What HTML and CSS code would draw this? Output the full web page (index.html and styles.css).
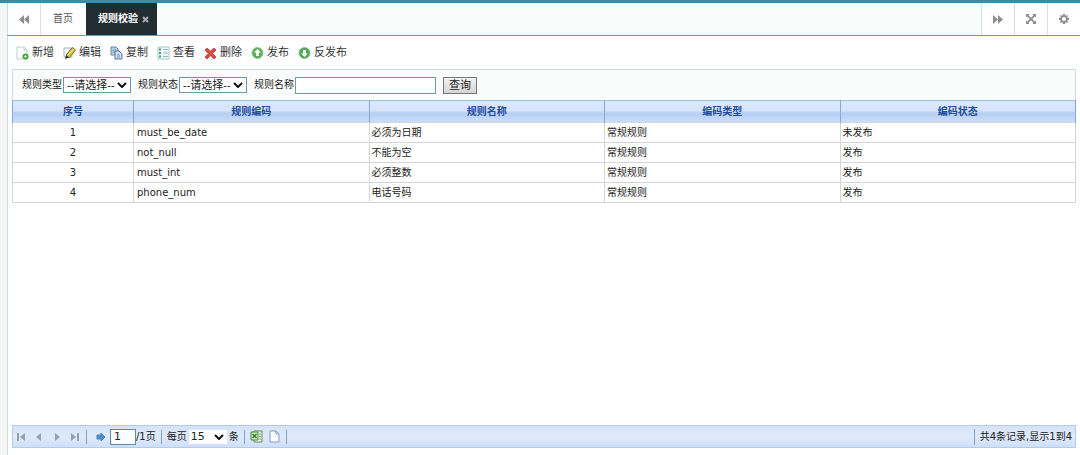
FILE: index.html
```html
<!DOCTYPE html>
<html lang="zh-CN">
<head>
<meta charset="UTF-8">
<title>规则校验</title>
<link rel="stylesheet" href="styles.css">
</head>
<body>

<div class="page">

  <!-- tab bar -->
  <nav class="tabs">
    <button type="button" class="tab-btn tab-prev" aria-label="向左">
      <svg width="10" height="9" viewBox="0 0 10 9"><path d="M5 0v9L0 4.500zM10 0v9L5 4.500z"/></svg>
    </button>
    <a href="#" class="tab">首页</a>
    <a href="#" class="tab active">规则校验
      <svg width="7" height="7" viewBox="0 0 7 7"><path d="M1 1l5 5M6 1L1 6"/></svg>
    </a>
    <span class="tabs-space"></span>
    <button type="button" class="tab-btn" aria-label="向右">
      <svg width="10" height="9" viewBox="0 0 10 9"><path d="M0 0v9l5-4.500zM5 0v9l5-4.500z"/></svg>
    </button>
    <button type="button" class="tab-btn" aria-label="全屏">
      <svg width="10" height="10" viewBox="0 0 10 10"><path d="M0 0h3.500L2.500 1.200 5 3.700l2.500-2.500L6.500 0H10v3.500L8.800 2.500 6.300 5l2.500 2.500L10 6.500V10H6.500l1-1.200L5 6.300 2.500 8.800l1 1.200H0V6.500l1.200 1L3.700 5 1.200 2.500 0 3.500z"/></svg>
    </button>
    <button type="button" class="tab-btn" aria-label="设置">
      <svg width="10" height="10" viewBox="0 0 10 10"><path fill-rule="evenodd" d="M4 0h2l.3 1.400.8.3L8.300 1 9 1.700l-.7 1.200.3.8L10 4v2l-1.400.3-.3.8.7 1.200-.7.7-1.200-.7-.8.3L6 10H4l-.3-1.400-.8-.3L1.700 9 1 8.300l.7-1.200-.3-.8L0 6V4l1.400-.3.3-.8L1 1.700 1.700 1l1.200.7.8-.3zM5 3a2 2 0 1 0 0 4 2 2 0 0 0 0-4z"/></svg>
    </button>
  </nav>

  <main class="content">

    <!-- actions -->
    <div class="toolbar">
      <button type="button">
        <svg width="13" height="14" viewBox="0 0 13 14"><path d="M1 1h7l3 3v9H1z" fill="#fcfdfd" stroke="#c3cdd0"/><path d="M8 1v3h3" fill="none" stroke="#c3cdd0"/><circle cx="9.500" cy="10.500" r="3" fill="#43a33b"/><path d="M9.500 9v3M8 10.500h3" stroke="#d4f2cb"/></svg>
        新增
      </button>
      <button type="button">
        <svg width="13" height="14" viewBox="0 0 13 14"><path d="M1 2h8v9H1z" fill="#f4f6f6" stroke="#aab2b5"/><path d="M3 9l6.500-7.500 3 2.500L6 12z" fill="#d8c83a" stroke="#6f7024"/><path d="M5 9l5.500-6" stroke="#f5ee8b"/><path d="M2 13l1-4 3 2.500z" fill="#333"/></svg>
        编辑
      </button>
      <button type="button">
        <svg width="13" height="14" viewBox="0 0 13 14"><path d="M1 1h5l2 2v6H1z" fill="#b8d0e8" stroke="#6486a6"/><path d="M2.500 4H6M2.500 6H6" stroke="#7799bb"/><path d="M5 5h4l3 3v5H5z" fill="#cbdef1" stroke="#55789c"/><path d="M7 9h3M7 11h3" stroke="#7799bb"/></svg>
        复制
      </button>
      <button type="button">
        <svg width="13" height="14" viewBox="0 0 13 14"><path d="M1 1h11v12H1z" fill="#eff8f7" stroke="#a6c9cb"/><path d="M2 3.500h2M2 7h2M2 10.500h2" stroke="#4b9a86" stroke-width="2"/><path d="M6 3.500h5M6 7h5M6 10.500h5" stroke="#8db9c1"/></svg>
        查看
      </button>
      <button type="button">
        <svg width="13" height="14" viewBox="0 0 13 14"><path d="M1 4l2-2 3.500 3L10 2l2 2-3.500 3.500L12 11l-2 2-3.500-3.500L3 13l-2-2 3.500-3.500z" fill="#d84a43" stroke="#c4504a"/></svg>
        删除
      </button>
      <button type="button">
        <svg width="13" height="14" viewBox="0 0 13 14"><circle cx="6.500" cy="7" r="5.500" fill="#5cae5c" stroke="#91c78e"/><path d="M6.500 3L3 6.500h2V10h3V6.500h2z" fill="#fff"/></svg>
        发布
      </button>
      <button type="button">
        <svg width="13" height="14" viewBox="0 0 13 14"><circle cx="6.500" cy="7" r="5.500" fill="#4ca552" stroke="#91c78e"/><path d="M6.500 11L3 7.500h2V4h3v3.500h2z" fill="#fff"/></svg>
        反发布
      </button>
    </div>

    <!-- search -->
    <form class="filter">
      <div class="field">
        <label for="type">规则类型</label>
        <select id="type"><option>--请选择--</option></select>
      </div>
      <div class="field">
        <label for="status">规则状态</label>
        <select id="status"><option>--请选择--</option></select>
      </div>
      <div class="field">
        <label for="name">规则名称</label>
        <input type="text" id="name">
      </div>
      <button type="button" class="search">查询</button>
    </form>

    <!-- list -->
    <table class="grid">
      <thead>
        <tr><th class="num">序号</th><th>规则编码</th><th>规则名称</th><th>编码类型</th><th>编码状态</th></tr>
      </thead>
      <tbody>
        <tr><td class="num">1</td><td class="code">must_be_date</td><td>必须为日期</td><td>常规规则</td><td>未发布</td></tr>
        <tr><td class="num">2</td><td class="code">not_null</td><td>不能为空</td><td>常规规则</td><td>发布</td></tr>
        <tr><td class="num">3</td><td class="code">must_int</td><td>必须整数</td><td>常规规则</td><td>发布</td></tr>
        <tr><td class="num">4</td><td class="code">phone_num</td><td>电话号码</td><td>常规规则</td><td>发布</td></tr>
      </tbody>
    </table>

    <!-- pager -->
    <div class="pager">
      <div class="pager-nav">
        <button type="button" aria-label="首页"><svg width="10" height="10" viewBox="0 0 10 10"><path d="M1 1h2v8H1zM9 1v8L4 5z"/></svg></button>
        <button type="button" aria-label="上一页"><svg width="10" height="10" viewBox="0 0 10 10"><path d="M7 1v8L2 5z"/></svg></button>
        <button type="button" aria-label="下一页"><svg width="10" height="10" viewBox="0 0 10 10"><path d="M3 1v8l5-4z"/></svg></button>
        <button type="button" aria-label="末页"><svg width="10" height="10" viewBox="0 0 10 10"><path d="M1 1v8l5-4zM7 1h2v8H7z"/></svg></button>
      </div>
      <span class="sep"></span>
      <button type="button" class="go" aria-label="跳转"><svg width="10" height="10" viewBox="0 0 10 10"><path d="M1 3h4V1l4 4-4 4V7H1z" fill="#4a8fd9" stroke="#4a80c4"/></svg></button>
      <input type="text" class="page-no" value="1" aria-label="页码">
      <span>/1页</span>
      <span class="sep"></span>
      <label for="size">每页</label>
      <select id="size" class="page-size"><option>15</option></select>
      <span>条</span>
      <span class="sep"></span>
      <div class="export">
        <button type="button" aria-label="导出Excel"><svg width="13" height="13" viewBox="0 0 13 13"><path d="M4 1h8v11H4z" fill="#f2f8ef" stroke="#5f8a5a"/><path d="M9 4h2M9 6.500h2M9 9h2" stroke="#78a870"/><path d="M1 2h7v8H1z" fill="#d4ebc8" stroke="#3f8a3a"/><path d="M2.500 4l4 4M6.500 4l-4 4" stroke="#2d7d2c" stroke-width="1.500"/></svg></button>
        <button type="button" aria-label="导出文本"><svg width="13" height="13" viewBox="0 0 13 13"><path d="M2 1h6l3 3v8H2z" fill="#f8fbff" stroke="#7e9dc4"/><path d="M8 1v3h3" fill="none" stroke="#7e9dc4"/></svg></button>
      </div>
      <span class="sep"></span>
      <span class="total">共4条记录,显示1到4</span>
    </div>

  </main>
</div>

</body>
</html>
```
FILE: styles.css
```css
:root{
  --top: #4287ac;
  --row: #d3d6d8;
  --head: #1f4b9a;
}
*{ box-sizing:border-box; }

body{
  margin:0;
  font-family:"DejaVu Sans", "Noto Sans CJK SC", sans-serif;
  font-size:10px;
  line-height:16px;
  color:#222;
  background:#f5f6f8;
}
button, input, select{
  font:inherit;
  color:inherit;
  margin:0;
}
button{
  padding:0;
  border:0;
  background:none;
  cursor:pointer;
}
select{
  appearance:none;
  border-radius:0;
  background:#fff url("data:image/svg+xml,%3Csvg xmlns='http://www.w3.org/2000/svg' width='10' height='6'%3E%3Cpath d='M1 1l4 4 4-4' fill='none' stroke='%23111' stroke-width='2'/%3E%3C/svg%3E") no-repeat right 3px center;
}
svg{ display:block; }

.page{
  display:flex;
  flex-direction:column;
  min-height:100vh;
  padding-left:7px;
  border-top:3px solid var(--top);
}

/* tab bar */
.tabs{
  display:flex;
  height:33px;
  background:#fafcfc;
  border-left:1px solid #cbdce4;
  border-bottom:1px solid #6c9db4;
}
.tab-btn{
  display:flex;
  align-items:center;
  justify-content:center;
  width:33px;
  border-left:1px solid #d5e0e5;
  background:#fff;
}
.tab-btn svg{ fill:#8e8e8e; }
.tab-prev{
  border-left:0;
  border-right:1px solid #d5e0e5;
}
.tab{
  display:flex;
  align-items:center;
  gap:4px;
  padding:0 13px 0 12px;
  color:#555;
  text-decoration:none;
  background:#fff;
}
.tab.active{
  padding:0 8px 0 12px;
  color:#fff;
  font-weight:bold;
  background:#222d32;
}
.tab.active svg{
  stroke:#a5adb0;
  stroke-width:2;
}
.tabs-space{ flex:1; }

.content{
  flex:1;
  display:flex;
  flex-direction:column;
  padding:0 4px 7px;
  border-left:1px solid #cbdce4;
  background:#fff;
}

/* toolbar */
.toolbar{
  display:flex;
  align-items:center;
  gap:9px;
  height:33px;
  padding:0 4px;
}
.toolbar button{
  display:flex;
  align-items:center;
  gap:3px;
  font-size:11px;
  color:#333;
}

/* search form */
.filter{
  display:flex;
  align-items:center;
  gap:7px;
  height:31px;
  padding:0 9px;
  border:1px solid #d0dade;
  border-bottom:0;
  background:#fafbfb;
}
.field{
  display:flex;
  align-items:center;
  gap:1px;
}
.field select{
  width:68px;
  height:16px;
  padding:0 0 0 3px;
  font-family:"Liberation Sans", "Noto Sans CJK SC", sans-serif;
  font-size:11px;
  line-height:14px;
  border:1px solid #6f9aa3;
}
.field input{
  width:141px;
  height:17px;
  padding:0 3px;
  border:1px solid #6f9aa3;
  background:#fff;
}
.search{
  width:34px;
  height:17px;
  font-size:11px;
  line-height:15px;
  border:1px solid #777;
  background:linear-gradient(#f5f5f5, #d4d4d8);
}

/* list */
.grid{
  width:100%;
  table-layout:fixed;
  border-collapse:collapse;
}
.grid th{
  height:22px;
  padding:0;
  color:var(--head);
  font-weight:bold;
  background:linear-gradient(#dbe8fc 0, #d3e2fa 48%, #b5cdf3 52%, #cbdefa 100%);
  border:1px solid #86a9d3;
  border-top-color:#a5c1dc;
  border-bottom:0;
}
.grid td{
  height:20px;
  padding:0 2px;
  border:1px solid var(--row);
}
.grid .num{
  width:121px;
  text-align:center;
}
.grid .code{ padding-left:3px; }

/* pager */
.pager{
  display:flex;
  align-items:center;
  height:23px;
  margin-top:auto;
  padding:0 3px;
  border:1px solid #b5cce8;
  background:linear-gradient(#d5e2f6, #dfeafc 50%, #cfdffa);
}
.pager-nav{
  display:flex;
  gap:8px;
  margin-right:1px;
}
.pager-nav svg{ fill:#92a2b4; }
.sep{
  width:1px;
  height:14px;
  margin:0 5px;
  background:#7fa3c9;
}
.go{ margin:0 4px; }
.page-no{
  width:26px;
  height:16px;
  padding:0 3px;
  font-size:11px;
  border:1px solid #5f8da5;
  background:#fff;
}
.page-size{
  width:38px;
  height:14px;
  margin:0 2px;
  padding:0 0 0 2px;
  font-size:11px;
  line-height:14px;
  border:0;
}
.export{
  display:flex;
  gap:5px;
}
.total{
  margin-left:auto;
  padding-left:5px;
  border-left:1px solid #7fa3c9;
}
```
